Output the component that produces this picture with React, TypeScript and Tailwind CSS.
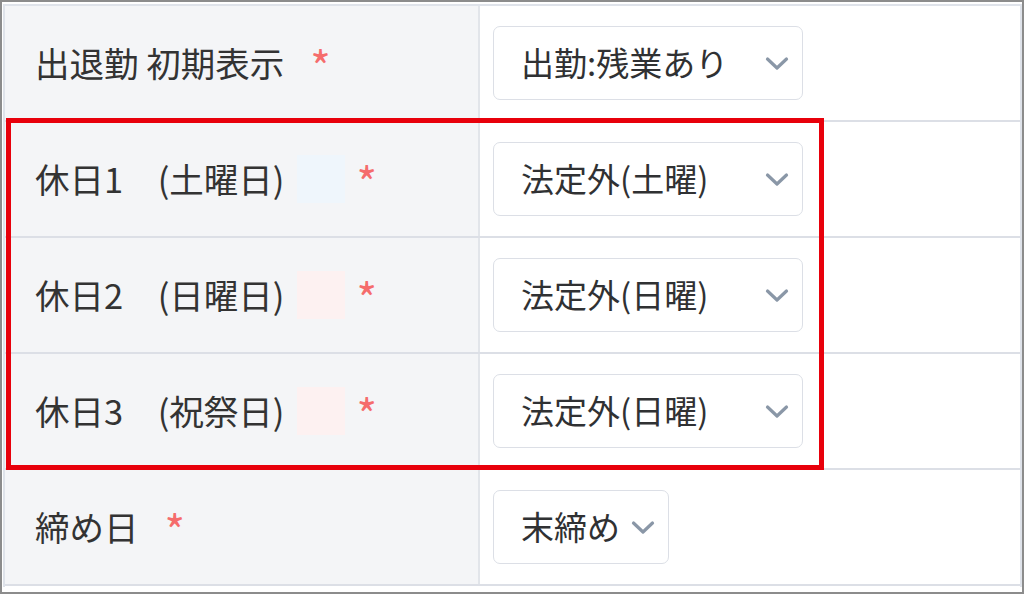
const font = { fontFamily: '"Noto Sans CJK JP", "Noto Sans", sans-serif' }

const Chevron = () => (
  <svg width="24" height="15" viewBox="0 0 24 15" className="shrink-0">
    <polyline
      points="2.5,3 12,12 21.5,3"
      fill="none"
      stroke="#8a97a7"
      strokeWidth="3.2"
      strokeLinecap="round"
      strokeLinejoin="round"
    />
  </svg>
)

type Row = {
  label: string
  swatch?: string
  value: string
  wide: boolean
}

const rows: Row[] = [
  { label: '出退勤 初期表示', value: '出勤:残業あり', wide: true },
  { label: '休日1　(土曜日)', swatch: 'bg-[#eff6fc]', value: '法定外(土曜)', wide: true },
  { label: '休日2　(日曜日)', swatch: 'bg-[#fdf1f1]', value: '法定外(日曜)', wide: true },
  { label: '休日3　(祝祭日)', swatch: 'bg-[#fdf1f1]', value: '法定外(日曜)', wide: true },
  { label: '締め日', value: '末締め', wide: false },
]

const App = () => {
  return (
    <div
      className="w-[1024px] h-[594px] overflow-hidden bg-white border-2 border-[#8c8c8c] pt-[2px] pl-[1px] pb-[5px]"
      style={font}
    >
      <div className="relative h-full border-t-2 border-l-2 border-r-2 border-[#dfe3ea]">
        {rows.map((row) => (
          <div
            key={row.label}
            className="grid grid-cols-[475px_1fr] h-[116px] border-b-2 border-[#dcdfe6]"
          >
            {/* Label */}
            <div className="flex items-center bg-[#f4f5f7] border-r-2 border-[#e2e5ea] pl-[30px] text-[34.5px] text-[#333333]">
              <span className="whitespace-pre">{row.label}</span>
              {row.swatch && (
                <span className={`ml-[13px] w-[48px] h-[48px] ${row.swatch}`}></span>
              )}
              <span
                className={`${row.swatch ? 'ml-[11px]' : 'ml-[26px]'} text-[#f56c6c] text-[44px] leading-none mt-[4px]`}
              >
                *
              </span>
            </div>

            {/* Select */}
            <div className="flex items-center pl-[13px]">
              <div
                className={`flex items-center justify-between h-[74px] ${row.wide ? 'w-[310px]' : 'w-[176px]'} border-[1.5px] border-[#dcdfe6] rounded-[7px] bg-white pl-[27px] pr-[13px] text-[33px] text-[#303133]`}
              >
                <span>{row.value}</span>
                <Chevron />
              </div>
            </div>
          </div>
        ))}

        {/* highlight frame */}
        <div className="absolute left-[1px] top-[112px] w-[818px] h-[352px] border-[5px] border-[#e8000b] pointer-events-none"></div>
      </div>
    </div>
  )
}

export default App
